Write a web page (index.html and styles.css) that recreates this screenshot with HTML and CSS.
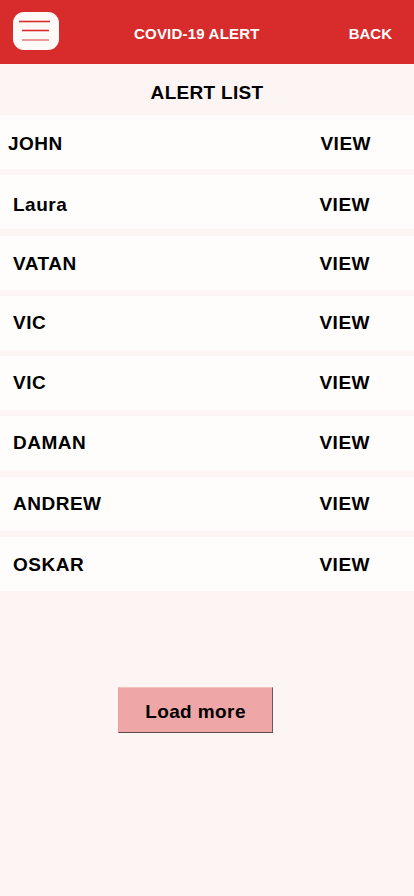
FILE: index.html
```html
<!DOCTYPE html>
<html lang="en">
<head>
<meta charset="utf-8">
<title>COVID-19 Alert</title>
<link rel="stylesheet" href="styles.css">
</head>
<body>
<header class="topbar">
  <button class="menu-btn" aria-label="Menu">
    <svg width="46" height="38" viewBox="0 0 46 38">
      <line x1="6" y1="9.5" x2="37" y2="9.5" stroke="#d62c2c" stroke-width="1.6"/>
      <line x1="9" y1="18.5" x2="36" y2="18.5" stroke="#d62c2c" stroke-width="1.6"/>
      <line x1="9" y1="28" x2="36" y2="28" stroke="#ec9a9a" stroke-width="2"/>
    </svg>
  </button>
  <div class="topbar-title">COVID-19 ALERT</div>
  <div class="topbar-back">BACK</div>
</header>
<main class="content">
  <h1 class="list-title">ALERT LIST</h1>
  <ul class="alert-list">
    <li class="alert-row alert-row--first"><span class="name">JOHN</span><span class="view">VIEW</span></li>
    <li class="alert-row alert-row--low"><span class="name">Laura</span><span class="view">VIEW</span></li>
    <li class="alert-row alert-row--mid"><span class="name">VATAN</span><span class="view">VIEW</span></li>
    <li class="alert-row"><span class="name">VIC</span><span class="view">VIEW</span></li>
    <li class="alert-row"><span class="name">VIC</span><span class="view">VIEW</span></li>
    <li class="alert-row"><span class="name">DAMAN</span><span class="view">VIEW</span></li>
    <li class="alert-row"><span class="name">ANDREW</span><span class="view">VIEW</span></li>
    <li class="alert-row alert-row--mid"><span class="name">OSKAR</span><span class="view">VIEW</span></li>
  </ul>
  <div class="load-wrap">
    <button class="load-more">Load more</button>
  </div>
</main>
</body>
</html>
```

FILE: styles.css
```css
* { box-sizing: border-box; }
html, body {
  margin: 0;
  padding: 0;
  background: #fdf4f4;
  font-family: "Liberation Sans", Arial, sans-serif;
  color: #000;
}
body { min-height: 896px; }

.topbar {
  height: 64px;
  background: #d82c2c;
  display: flex;
  align-items: center;
  padding-left: 13px;
}
.menu-btn {
  width: 46px;
  height: 38px;
  border: none;
  padding: 0;
  margin: 0;
  background: #fff9f8;
  border-radius: 11px;
  display: block;
  margin-top: -2px;
}
.menu-btn svg { display: block; }
.topbar-title {
  margin-left: 75px;
  margin-top: 3px;
  color: #fff;
  font-weight: bold;
  font-size: 15px;
  line-height: 18px;
  letter-spacing: 0.2px;
}
.topbar-back {
  margin-left: auto;
  margin-right: 22px;
  margin-top: 3px;
  color: #fff;
  font-weight: bold;
  font-size: 15px;
  line-height: 18px;
}

.list-title {
  margin: 0;
  padding: 18px 0 11px;
  text-align: center;
  font-size: 19px;
  line-height: 22px;
  font-weight: bold;
  letter-spacing: 0.3px;
}

.alert-list {
  list-style: none;
  margin: 0;
  padding: 0;
  display: flex;
  flex-direction: column;
  gap: 6.3px;
}
.alert-row {
  height: 54px;
  background: #fffdfc;
  display: flex;
  align-items: center;
  justify-content: space-between;
  padding: 0 44px 0 13px;
  font-size: 19px;
  font-weight: bold;
  letter-spacing: 0.5px;
}
.alert-row--first { padding-left: 8px; padding-right: 43px; padding-top: 3px; }
.alert-row--low { padding-top: 5px; }
.alert-row--mid { padding-top: 2px; }

.load-wrap {
  padding: 96px 0 0 118px;
}
.load-more {
  width: 155px;
  height: 46px;
  background: #eea6a6;
  border: none;
  border-top: 1px solid #f3c0c0;
  border-left: 1px solid #e8a0a0;
  border-right: 1px solid #6e5656;
  border-bottom: 1px solid #5e4848;
  font-family: "Liberation Sans", Arial, sans-serif;
  font-size: 19px;
  font-weight: bold;
  letter-spacing: 0.4px;
  color: #000;
  padding: 4px 0 0 0;
}
```
